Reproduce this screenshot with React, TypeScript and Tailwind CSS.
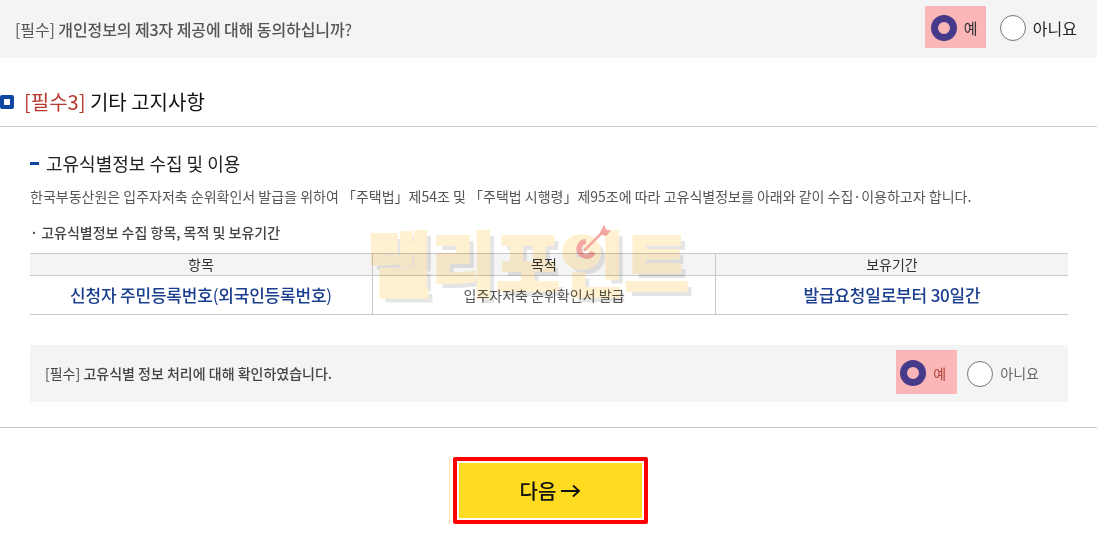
function Radio({ checked, label, big }: { checked?: boolean; label: string; big?: boolean }) {
  if (checked) {
    return (
      <div className={`flex items-center w-[61px] pt-[2px] bg-[#fbb7b7] ${big ? 'h-[42px] pl-[6px] mb-[4px]' : 'h-[44px] pl-[4px] mb-[3px]'}`}>
        <span className="w-[26px] h-[26px] rounded-full border-[7px] border-[#463a8b] bg-[#fbb7b7]" />
        <span className={`ml-[7px] ${big ? 'text-[15px] text-[#333]' : 'text-[14px] text-[#b0443a]'}`}>{label}</span>
      </div>
    );
  }
  return (
    <div className={`flex items-center ${big ? 'ml-[14px] mb-[2px]' : 'ml-[10px]'}`}>
      <span className="w-[26px] h-[26px] rounded-full border border-[#767676] bg-white" />
      <span className={`ml-[7px] ${big ? 'text-[16px] text-[#222]' : 'text-[14px] text-[#666]'}`}>{label}</span>
    </div>
  );
}

const th = 'h-[22px] flex items-center justify-center text-[14px] text-[#333] bg-[#f4f4f4]';
const td = 'h-[38px] flex items-center justify-center';

export default function App() {
  return (
    <div className="relative w-[1097px] h-[533px] overflow-hidden bg-white font-['Noto_Sans_CJK_KR','Noto_Sans',sans-serif]">
      {/* top question */}
      <div className="h-[58px] bg-[#f4f4f4] pl-[15px] pr-[20px] flex items-center justify-between">
        <p className="text-[16px] tracking-[-0.1px] font-medium text-[#555]"><span className="font-normal">[필수]</span> 개인정보의 제3자 제공에 대해 동의하십니까<span className="font-normal">?</span></p>
        <div className="flex items-center">
          <Radio checked big label="예" />
          <Radio big label="아니요" />
        </div>
      </div>

      {/* section title */}
      <div className="h-[69px] border-b border-[#c8c8c8] flex items-center pt-[20px]">
        <span className="w-[14px] h-[14px] rounded-[2px] border-[4px] border-[#0d47a1] bg-white" />
        <h2 className="ml-[10px] text-[20px] text-[#111]"><span className="text-[#b8382e]">[필수3]</span> 기타 고지사항</h2>
      </div>

      <div className="pl-[30px] pr-[29px]">
        <div className="flex items-center h-[24px] mt-[24px]">
          <span className="w-[9px] h-[3px] bg-[#0d47a1]" />
          <h3 className="ml-[7px] text-[18px] text-[#222]">고유식별정보 수집 및 이용</h3>
        </div>
        <p className="mt-[10px] h-[22px] leading-[22px] text-[14px] text-[#555] whitespace-nowrap">한국부동산원은 입주자저축 순위확인서 발급을 위하여 「주택법」제54조 및 「주택법 시행령」제95조에 따라 고유식별정보를 아래와 같이 수집·이용하고자 합니다.</p>
        <p className="mt-[14px] h-[22px] leading-[22px] text-[14px] font-medium text-[#444]">· 고유식별정보 수집 항목, 목적 및 보유기간</p>

        {/* table */}
        <div className="mt-[10px] grid grid-cols-[342px_343px_353px] border-t border-b border-[#c8c8c8]">
          <div className={`${th} border-b border-[#c8c8c8]`}>항목</div>
          <div className={`${th} border-b border-l border-[#c8c8c8]`}>목적</div>
          <div className={`${th} border-b border-l border-[#c8c8c8]`}>보유기간</div>
          <div className={`${td} text-[17px] tracking-[-0.2px] font-medium text-[#1b3f8f]`}>신청자 주민등록번호<span className="font-normal">(</span>외국인등록번호<span className="font-normal">)</span></div>
          <div className={`${td} border-l border-[#c8c8c8] text-[14px] text-[#555]`}>입주자저축 순위확인서 발급</div>
          <div className={`${td} border-l border-[#c8c8c8] text-[17px] tracking-[-0.2px] font-medium text-[#1b3f8f]`}>발급요청일로부터 30일간</div>
        </div>

        {/* confirm */}
        <div className="mt-[30px] h-[57px] bg-[#f4f4f4] pl-[15px] pr-[29px] flex items-center justify-between">
          <p className="text-[14px] font-medium text-[#444]"><span className="font-normal">[필수]</span> 고유식별 정보 처리에 대해 확인하였습니다.</p>
          <div className="flex items-center">
            <Radio checked label="예" />
            <Radio label="아니요" />
          </div>
        </div>
      </div>

      <div className="mt-[25px] border-t border-[#c8c8c8]" />

      <div className="mt-[29px] flex justify-center">
        <span className="mt-[1px] mr-[3px] w-px h-[66px] bg-[#ffe9a0]" />
        <button className="w-[195px] h-[67px] rounded-[2px] border-[4px] border-[#ff0000] bg-white p-[2px]">
          <span className="flex items-center justify-center w-full h-full bg-[#ffdb22] text-[20px] font-medium text-[#111]">
            다음
            <svg className="ml-[4px]" width="21" height="14" viewBox="0 0 21 14" fill="none" stroke="#111" strokeWidth="1.8">
              <path d="M1 7h18M13 1.5 19 7l-6 5.5" />
            </svg>
          </span>
        </button>
      </div>

      {/* watermark */}
      <div className="absolute left-[367px] top-[218px] flex items-center pointer-events-none mix-blend-multiply">
        <span className="text-[70px] leading-[86px] font-black text-[#fff0cf] [-webkit-text-stroke:2px_#fff0cf] [text-shadow:5px_5px_0_rgba(170,170,170,0.3)] whitespace-nowrap">랠리포인트</span>
        <svg className="absolute left-[207px] top-[5px]" width="37" height="40" viewBox="0 0 44 46" fill="none">
          <path d="M36 8 12 32" stroke="#f3a6a0" strokeWidth="3" />
          <path d="M30 12 36 1l2 6 6 1-6 7Z" fill="#f3a6a0" />
          <path d="M14 21a9 9 0 1 0 9 13" stroke="#f3a6a0" strokeWidth="6" />
        </svg>
      </div>
    </div>
  );
}
